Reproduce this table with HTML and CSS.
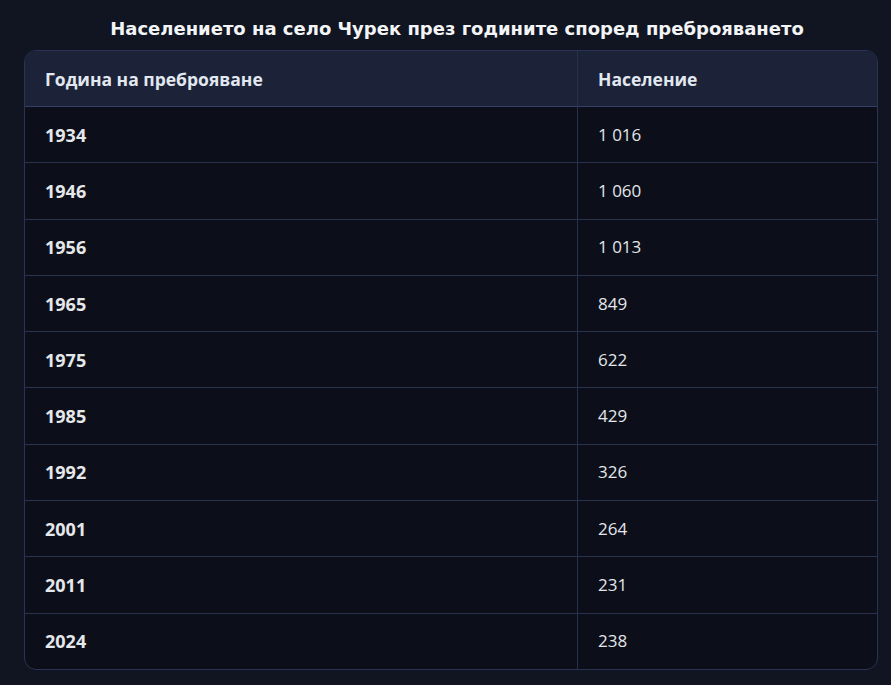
FILE: index.html
```html
<!DOCTYPE html>
<html lang="bg">
<head>
<meta charset="utf-8">
<link rel="stylesheet" href="styles.css">
</head>
<body>
<p class="prev">Населението на село Чурек през годините според преброяването</p>
<h2 class="title">Населението на село Чурек през годините според преброяването</h2>
<div class="table-wrap">
  <table class="pop">
    <thead>
      <tr><th class="c1">Година на преброяване</th><th>Население</th></tr>
    </thead>
    <tbody>
      <tr><td class="c1 year">1934</td><td>1 016</td></tr>
      <tr><td class="c1 year">1946</td><td>1 060</td></tr>
      <tr><td class="c1 year">1956</td><td>1 013</td></tr>
      <tr><td class="c1 year">1965</td><td>849</td></tr>
      <tr><td class="c1 year">1975</td><td>622</td></tr>
      <tr><td class="c1 year">1985</td><td>429</td></tr>
      <tr><td class="c1 year">1992</td><td>326</td></tr>
      <tr><td class="c1 year">2001</td><td>264</td></tr>
      <tr><td class="c1 year">2011</td><td>231</td></tr>
      <tr class="last"><td class="c1 year">2024</td><td>238</td></tr>
    </tbody>
  </table>
</div>
</body>
</html>
```
FILE: styles.css
```css
html, body {
  margin: 0;
  padding: 0;
  background: #111522;
}
body {
  font-family: "Open Sans", "Noto Sans", sans-serif;
  color: #e5e7eb;
  padding: 0 13px 0 24px;
  overflow: hidden;
}
.prev {
  margin: -24px 0 0 0;
  height: 26px;
  font-family: "DejaVu Sans", sans-serif;
  font-weight: bold;
  font-size: 18px;
  line-height: 28px;
  text-align: center;
  color: #f3f4f6;
  padding-left: 12px;
  overflow: hidden;
}
.title {
  margin: 0 0 7px 0;
  padding: 13px 0 0 12px;
  font-family: "DejaVu Sans", sans-serif;
  font-weight: bold;
  font-size: 18px;
  line-height: 28px;
  text-align: center;
  color: #f3f4f6;
}
.table-wrap {
  border: 1px solid #2a3452;
  border-radius: 12px;
  overflow: hidden;
  background: #0c0f19;
}
.pop {
  width: 100%;
  border-collapse: separate;
  border-spacing: 0;
  font-size: 17px;
}
.pop th, .pop td {
  text-align: left;
  padding: 0 20px;
  height: 55.3px;
  border-bottom: 1px solid #28324d;
  line-height: 24px;
}
.pop th {
  background: #1c2238;
  color: #e2e8f0;
  font-weight: 700;
  font-size: 17.5px;
  height: 55px;
  border-bottom-color: #34406a;
}
.pop .c1 {
  width: 512px;
  border-right: 1px solid #28324d;
}
.pop td {
  color: #e3e6ec;
}
.pop td.year {
  font-weight: 700;
  font-size: 18px;
  color: #e5e7eb;
}
.pop tr.last td {
  border-bottom: none;
}
```
